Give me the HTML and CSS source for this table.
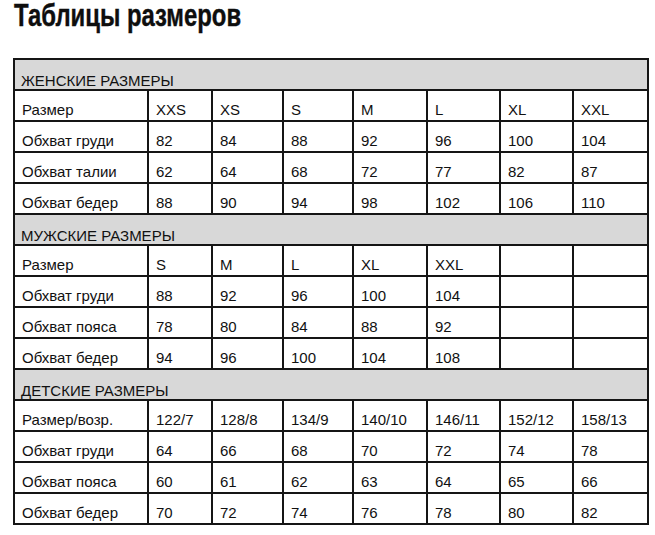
FILE: index.html
```html
<!DOCTYPE html>
<html lang="ru">
<head>
<meta charset="utf-8">
<title>Таблицы размеров</title>
<link rel="stylesheet" href="styles.css">
</head>
<body>
<div class="page">
  <h1 class="title"><span class="title-text">Таблицы размеров</span></h1>
  <div class="chart">
    <div class="band">ЖЕНСКИЕ РАЗМЕРЫ</div>
    <div class="cell">Размер</div><div class="cell">XXS</div><div class="cell">XS</div><div class="cell">S</div><div class="cell">M</div><div class="cell">L</div><div class="cell">XL</div><div class="cell">XXL</div>
    <div class="cell">Обхват груди</div><div class="cell">82</div><div class="cell">84</div><div class="cell">88</div><div class="cell">92</div><div class="cell">96</div><div class="cell">100</div><div class="cell">104</div>
    <div class="cell">Обхват талии</div><div class="cell">62</div><div class="cell">64</div><div class="cell">68</div><div class="cell">72</div><div class="cell">77</div><div class="cell">82</div><div class="cell">87</div>
    <div class="cell">Обхват бедер</div><div class="cell">88</div><div class="cell">90</div><div class="cell">94</div><div class="cell">98</div><div class="cell">102</div><div class="cell">106</div><div class="cell">110</div>

    <div class="band">МУЖСКИЕ РАЗМЕРЫ</div>
    <div class="cell">Размер</div><div class="cell">S</div><div class="cell">M</div><div class="cell">L</div><div class="cell">XL</div><div class="cell">XXL</div><div class="cell"></div><div class="cell"></div>
    <div class="cell">Обхват груди</div><div class="cell">88</div><div class="cell">92</div><div class="cell">96</div><div class="cell">100</div><div class="cell">104</div><div class="cell"></div><div class="cell"></div>
    <div class="cell">Обхват пояса</div><div class="cell">78</div><div class="cell">80</div><div class="cell">84</div><div class="cell">88</div><div class="cell">92</div><div class="cell"></div><div class="cell"></div>
    <div class="cell">Обхват бедер</div><div class="cell">94</div><div class="cell">96</div><div class="cell">100</div><div class="cell">104</div><div class="cell">108</div><div class="cell"></div><div class="cell"></div>

    <div class="band">ДЕТСКИЕ РАЗМЕРЫ</div>
    <div class="cell">Размер/возр.</div><div class="cell">122/7</div><div class="cell">128/8</div><div class="cell">134/9</div><div class="cell">140/10</div><div class="cell">146/11</div><div class="cell">152/12</div><div class="cell">158/13</div>
    <div class="cell">Обхват груди</div><div class="cell">64</div><div class="cell">66</div><div class="cell">68</div><div class="cell">70</div><div class="cell">72</div><div class="cell">74</div><div class="cell">78</div>
    <div class="cell">Обхват пояса</div><div class="cell">60</div><div class="cell">61</div><div class="cell">62</div><div class="cell">63</div><div class="cell">64</div><div class="cell">65</div><div class="cell">66</div>
    <div class="cell">Обхват бедер</div><div class="cell">70</div><div class="cell">72</div><div class="cell">74</div><div class="cell">76</div><div class="cell">78</div><div class="cell">80</div><div class="cell">82</div>
  </div>
</div>
</body>
</html>
```

FILE: styles.css
```css
html, body {
  margin: 0;
  padding: 0;
  background: #ffffff;
}

.page {
  padding: 0 0 0 13px;
  font-family: "Liberation Sans", Arial, sans-serif;
  color: #111111;
}

.title {
  margin: 0 0 26px 1px;
  font-family: "Liberation Sans", Arial, sans-serif;
  font-weight: bold;
  font-size: 31px;
  line-height: 32px;
  color: #0e0e0e;
}

.title-text {
  display: inline-block;
  transform: scaleX(0.77);
  transform-origin: 0 50%;
  white-space: nowrap;
  -webkit-text-stroke: 0.4px #0e0e0e;
}

.chart {
  display: grid;
  grid-template-columns: 132px 62px 69px 68px 72px 71px 71px 73px;
  grid-auto-rows: 29px;
  gap: 2px;
  padding: 2px;
  width: max-content;
  background: #151515;
}

.cell,
.band {
  display: flex;
  align-items: flex-end;
  font-size: 15px;
  line-height: 17px;
  white-space: nowrap;
}

.cell {
  background: #ffffff;
  padding: 0 0 2px 7px;
}

.band {
  grid-column: 1 / -1;
  background: #d8d8d8;
  padding: 0 0 0 6px;
}
```
